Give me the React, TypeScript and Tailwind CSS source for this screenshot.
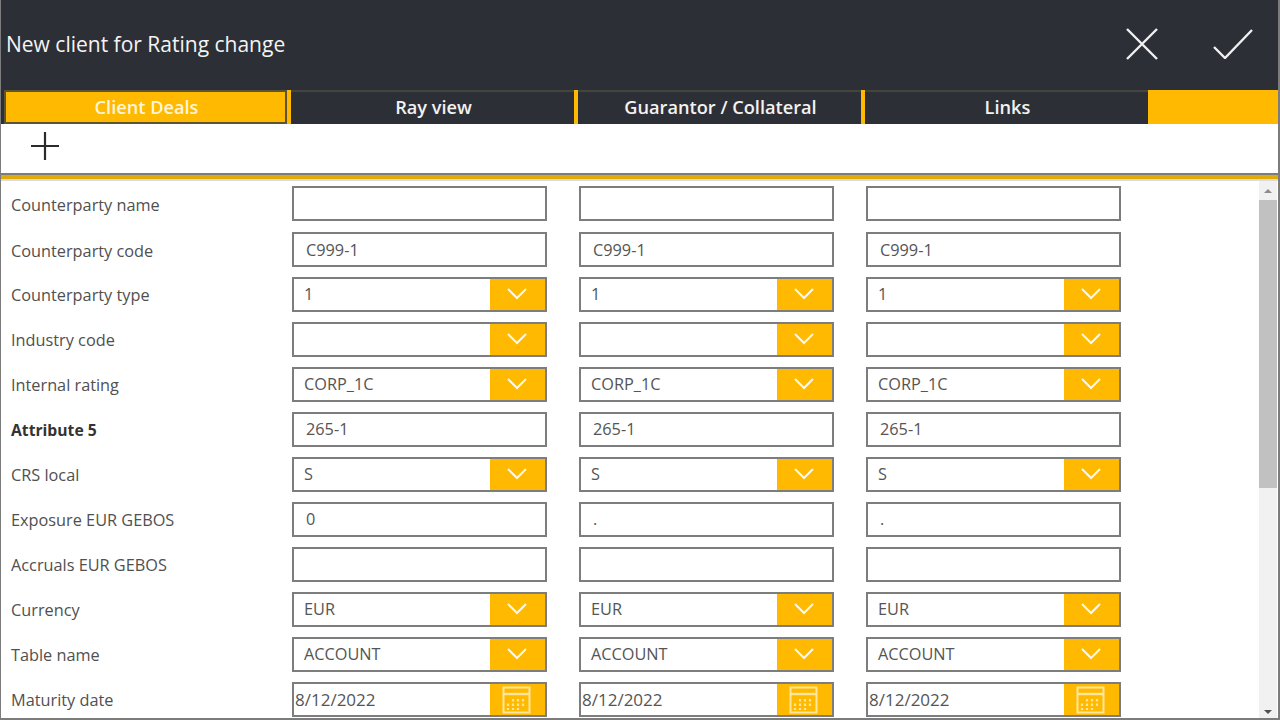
import React from "react";

type Kind = "text" | "select" | "date";
type Row = { label: string; kind: Kind; values: [string, string, string]; bold?: boolean };

const rows: Row[] = [
  { label: "Counterparty name", kind: "text", values: ["", "", ""] },
  { label: "Counterparty code", kind: "text", values: ["C999-1", "C999-1", "C999-1"] },
  { label: "Counterparty type", kind: "select", values: ["1", "1", "1"] },
  { label: "Industry code", kind: "select", values: ["", "", ""] },
  { label: "Internal rating", kind: "select", values: ["CORP_1C", "CORP_1C", "CORP_1C"] },
  { label: "Attribute 5", kind: "text", values: ["265-1", "265-1", "265-1"], bold: true },
  { label: "CRS local", kind: "select", values: ["S", "S", "S"] },
  { label: "Exposure EUR GEBOS", kind: "text", values: ["0", ".", "."] },
  { label: "Accruals EUR GEBOS", kind: "text", values: ["", "", ""] },
  { label: "Currency", kind: "select", values: ["EUR", "EUR", "EUR"] },
  { label: "Table name", kind: "select", values: ["ACCOUNT", "ACCOUNT", "ACCOUNT"] },
  { label: "Maturity date", kind: "date", values: ["8/12/2022", "8/12/2022", "8/12/2022"] },
];

function Chevron() {
  return (
    <svg className="mr-[2px] mb-[2px]" width="22" height="13" viewBox="0 0 22 13" fill="none" stroke="#ffffff" strokeWidth="2" strokeOpacity="0.92">
      <path d="M2 2 L11 11 L20 2" />
    </svg>
  );
}

function CalendarIcon() {
  return (
    <svg className="mr-[2px]" width="29" height="28" viewBox="0 0 29 28" fill="none" stroke="#ffe7a0" strokeWidth="2">
      <rect x="1.5" y="1.5" width="26" height="25" />
      <path d="M1.5 8 H27.5" strokeWidth="2.4" />
      <path d="M11 13 v2.5 M16 13 v2.5 M21 13 v2.5 M6 17.5 v2.5 M11 17.5 v2.5 M16 17.5 v2.5 M21 17.5 v2.5 M6 22 v2 M11 22 v2 M16 22 v2" strokeWidth="2.2" />
    </svg>
  );
}

function Field({ kind, value, shiftDown }: { kind: Kind; value: string; shiftDown?: boolean }) {
  const type =
    kind === "text"
      ? "pl-[12px] text-[16.3px]"
      : kind === "select"
        ? "pl-[10px] text-[16.3px]"
        : "pl-[1px] text-[17px]";
  return (
    <div className="flex h-[35px] w-[255px] shrink-0 items-stretch border-2 border-[#7d7d7d] bg-white">
      <div className={`flex flex-1 items-center ${type} ${shiftDown ? "pt-[2px]" : ""} text-[#555555]`}>{value}</div>
      {kind !== "text" && (
        <div className="flex w-[55px] items-center justify-center bg-[#ffb900]">
          {kind === "select" ? <Chevron /> : <CalendarIcon />}
        </div>
      )}
    </div>
  );
}

function Tab({ label, active }: { label: string; active?: boolean }) {
  return (
    <div
      className={
        active
          ? "flex h-[34px] w-[283px] items-center justify-center border-2 border-[#5c5433] bg-[#ffb900] pt-[2px] pl-[2px] text-[18.2px] font-semibold text-[#fff6d8]"
          : "flex h-[34px] w-[283px] items-center justify-center border-t-2 border-[#45453f] bg-[#2d2f36] pl-[2px] text-[18.2px] font-semibold text-[#f2f2f2]"
      }
    >
      {label}
    </div>
  );
}

function Sep() {
  return <div className="h-[34px] w-[4px] bg-[#ffb900]" />;
}

export default function App() {
  return (
    <div className="flex h-[720px] w-[1280px] flex-col overflow-hidden border-r-2 border-b-2 border-l border-[#7c7c7c] bg-white font-['Open_Sans','Noto_Sans',sans-serif]">
      {/* Header */}
      <header className="flex h-[90px] shrink-0 items-center justify-between bg-[#2d2f36] pl-[5px] pr-[25px]">
        <h1 className="text-[21px] font-normal text-[#f4f4f4]">New client for Rating change</h1>
        <div className="mb-[3px] flex items-center gap-[55px]">
          <svg width="32" height="32" viewBox="0 0 32 32" fill="none" stroke="#f0f0f0" strokeWidth="2.4">
            <path d="M1 1 L31 31 M31 1 L1 31" />
          </svg>
          <svg width="40" height="30" viewBox="0 0 40 30" fill="none" stroke="#f0f0f0" strokeWidth="2.4">
            <path d="M1 18 L12 29 L39 1" />
          </svg>
        </div>
      </header>

      {/* Tabs */}
      <nav className="flex h-[34px] shrink-0 bg-[#2d2f36] pl-[3px]">
        <Tab label="Client Deals" active />
        <Sep />
        <Tab label="Ray view" />
        <Sep />
        <Tab label="Guarantor / Collateral" />
        <Sep />
        <Tab label="Links" />
        <div className="h-[34px] flex-1 bg-[#ffb900]" />
      </nav>

      {/* Toolbar */}
      <div className="flex h-[49px] shrink-0 items-center pb-[6px] pl-[29px]">
        <svg width="30" height="30" viewBox="0 0 30 30" fill="none" stroke="#2b2b2b" strokeWidth="2.2">
          <path d="M15 1 V29 M1 15 H29" />
        </svg>
      </div>
      <div className="h-[8px] shrink-0 border-t-2 border-b-2 border-t-[#7c7c7c] border-b-[#dcdcdc] bg-[#e0aa0a]" />

      {/* Form */}
      <div className="flex min-h-0 flex-1">
        <div className="flex min-w-0 flex-1 flex-col gap-[10px] pt-[5px] pl-[10px]">
          {rows.map((r, i) => (
            <div key={r.label} className={`flex shrink-0 items-center ${i === 1 ? "mt-[1px]" : ""}`}>
              <div
                className={`w-[281px] shrink-0 ${i < 2 ? "pt-[3px]" : "pt-[2px]"} ${
                  r.bold ? "text-[15.7px] font-bold text-[#333333]" : "text-[16.3px] text-[#505050]"
                }`}
              >
                {r.label}
              </div>
              <div className="flex gap-[32px]">
                {r.values.map((v, j) => (
                  <Field key={j} kind={r.kind} value={v} shiftDown={i === 1} />
                ))}
              </div>
            </div>
          ))}
        </div>

        {/* Scrollbar */}
        <div className="mr-[1px] flex w-[18px] shrink-0 flex-col items-center bg-[#f1f1f1]">
          <div className="flex h-[19px] items-center justify-center">
            <div className="h-0 w-0 border-x-[4px] border-b-[4px] border-x-transparent border-b-[#8c8c8c]" />
          </div>
          <div className="h-[288px] w-full bg-[#c1c1c1]" />
          <div className="flex flex-1 items-end justify-center pb-[4px]">
            <div className="h-0 w-0 border-x-[4px] border-t-[4px] border-x-transparent border-t-[#505050]" />
          </div>
        </div>
      </div>
    </div>
  );
}
